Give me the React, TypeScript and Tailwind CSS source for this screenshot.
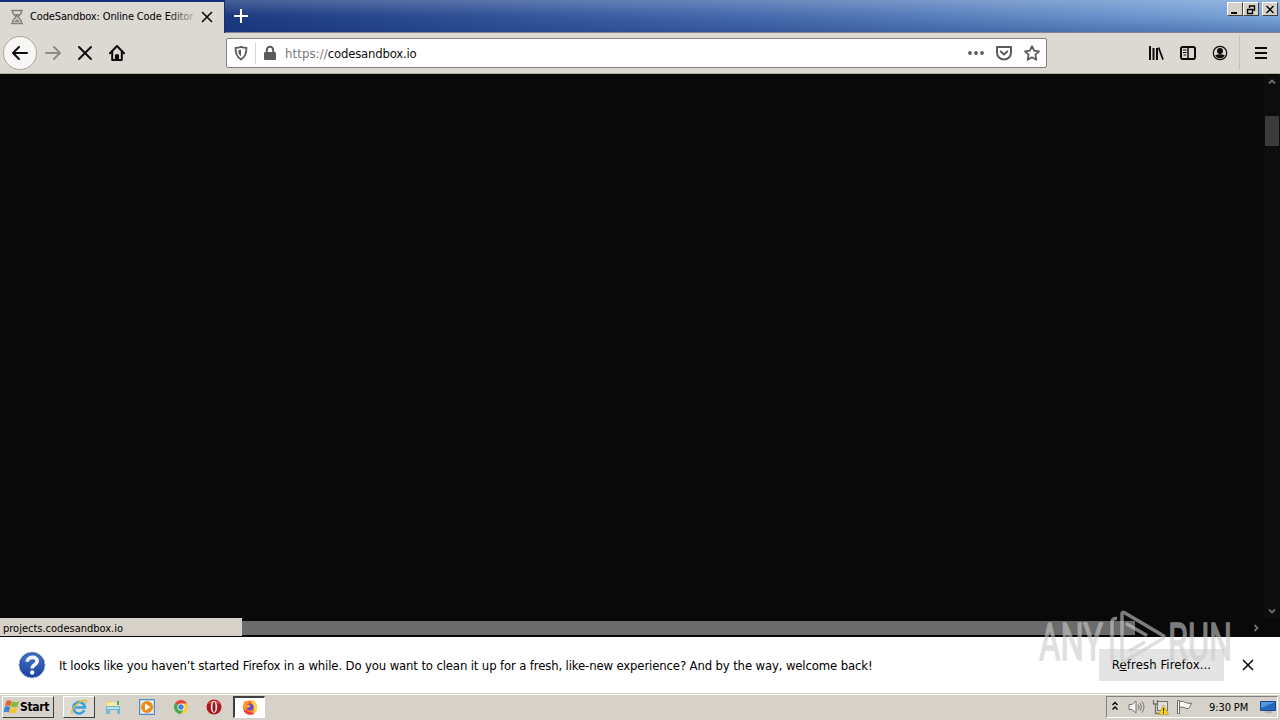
import type { ReactNode } from 'react';

const Hourglass = () => (
	<svg width="14" height="16" viewBox="0 0 14 16" fill="none" stroke="#85827e" strokeWidth="1.5">
		<path d="M1 1.5h12M1 14.5h12M2.8 2v2.2L6 8l-3.2 3.8V14M11.2 2v2.2L8 8l3.2 3.8V14" />
		<path d="M4 5h6L7 8zM4 13l3-3 3 3z" fill="#85827e" stroke="none" />
	</svg>
);

const Cross = ({ size, weight }: { size: number; weight: number }) => (
	<svg width={size} height={size} viewBox="0 0 16 16" fill="none" stroke="#0c0c0d" strokeWidth={weight} strokeLinecap="round">
		<path d="M2 2l12 12M14 2L2 14" />
	</svg>
);

const Arrow = ({ color }: { color: string }) => (
	<svg width="18" height="18" viewBox="0 0 18 18" fill="none" stroke={color} strokeWidth="2" strokeLinecap="round" strokeLinejoin="round">
		<path d="M16 9H2M8 3L2 9l6 6" />
	</svg>
);

const CaptionButton = ({ children }: { children: ReactNode }) => (
	<div className="w-4 h-[14px] bg-[#d6d1c9] border-t border-l border-t-white border-l-white border-r border-b border-r-[#404040] border-b-[#404040] flex items-center justify-center">
		<svg width="12" height="11" viewBox="0 0 12 11" fill="none" stroke="#000">
			{children}
		</svg>
	</div>
);

const TitleBar = () => (
	<div className="h-[33px] flex items-start bg-[linear-gradient(to_right,#0a246a_0%,#29498f_30%,#4a6fb0_62%,#7ba6da_100%)] relative">
		<div className="absolute inset-0 bg-linear-to-b from-white/20 via-transparent to-[#102a70]/30 border-b border-[#7f868f]" />
		<div className="relative w-[225px] h-[33px] pt-[2px] bg-[#152f78]">
			<div className="h-[31px] w-[224px] bg-[#dcd8d2] flex items-center">
				<div className="ml-[10px] -mt-[2px]">
					<Hourglass />
				</div>
				<div className="relative ml-[6px] -mt-px w-[165px] h-4 overflow-hidden whitespace-nowrap text-[11px] leading-4 tracking-[-0.14px]">
					CodeSandbox: Online Code Editor
					<div className="absolute right-0 top-0 h-4 w-7 bg-linear-to-r from-transparent to-[#dcd8d2]/85" />
				</div>
				<div className="ml-[6px] -mt-[2px]">
					<Cross size={12} weight={2.2} />
				</div>
			</div>
		</div>
		<svg className="relative ml-2 mt-2" width="16" height="16" viewBox="0 0 16 16" stroke="#fff" strokeWidth="2">
			<path d="M1 8h14M8 1v14" />
		</svg>
		<div className="relative ml-auto mt-[2px] mr-[2px] flex">
			<CaptionButton>
				<path d="M2 9h6" strokeWidth="2" />
			</CaptionButton>
			<CaptionButton>
				<path d="M4.5 4V2h5v4H8M4 2h6M2.5 5.5h5v4h-5zM2 5.5h6" strokeWidth="1.3" />
			</CaptionButton>
			<div className="w-[3px]" />
			<CaptionButton>
				<path d="M2.5 2l7 7M9.5 2l-7 7" strokeWidth="1.4" />
			</CaptionButton>
		</div>
	</div>
);

const NavBar = () => (
	<div className="h-[41px] bg-[#dcd8d2] border-b border-[#b1ada7] flex items-center">
		<div className="ml-[3px] w-[34px] h-[34px] rounded-full bg-[#f8f7f5] border border-[#aaa7a1] flex items-center justify-center">
			<Arrow color="#0c0c0d" />
		</div>
		<div className="ml-[7px] rotate-180">
			<Arrow color="#8e8b87" />
		</div>
		<div className="ml-[15px]">
			<Cross size={16} weight={2} />
		</div>
		<svg className="ml-4" width="16" height="16" viewBox="0 0 16 16" fill="none" stroke="#0c0c0d" strokeWidth="2" strokeLinejoin="round" strokeLinecap="round">
			<path d="M1 8.2L8 1l7 7.2" />
			<path d="M3.2 7v8h9.6V7" />
			<path d="M6.5 14.5V9.8h3v4.7z" fill="#0c0c0d" strokeWidth="1" />
		</svg>
		<div className="ml-[101px] w-[821px] h-[30px] bg-white border border-[#85827e] rounded-[2px] flex items-center">
			<svg className="ml-[6px]" width="16" height="16" viewBox="0 0 16 16" fill="none" stroke="#5b5b5d">
				<path d="M8 1.8c2 .8 3.800 1 5.500 1 0 5.500-1 9.200-5.500 11.700C3.500 12 2.500 8.300 2.500 2.800c1.700 0 3.500-.2 5.500-1z" strokeWidth="1.800" strokeLinejoin="round" />
				<path d="M8 4.500v7C6 10 5.500 8 5.300 5.200z" fill="#5b5b5d" stroke="none" />
			</svg>
			<div className="ml-[6px] w-px h-[22px] bg-[#d7d7d8]" />
			<svg className="ml-[6px]" width="16" height="16" viewBox="0 0 16 16">
				<rect x="2" y="7" width="12" height="8" rx="1.2" fill="#5b5b5d" />
				<path d="M4.8 8V5a3.2 3.2 0 0 1 6.400 0v3" fill="none" stroke="#5b5b5d" strokeWidth="2" />
			</svg>
			<div className="ml-[7px] mt-px text-[13px] leading-4 text-[#77777a] whitespace-nowrap tracking-[0.1px]">
				https://<span className="text-[#0c0c0d] tracking-[-0.2px]">codesandbox.io</span>
			</div>
			<div className="ml-auto mr-[6px] flex items-center gap-3">
				<svg width="16" height="16" viewBox="0 0 16 16" fill="#5b5b5d">
					<circle cx="2" cy="8" r="1.900" />
					<circle cx="8" cy="8" r="1.900" />
					<circle cx="14" cy="8" r="1.900" />
				</svg>
				<svg width="16" height="16" viewBox="0 0 16 16" fill="none" stroke="#5b5b5d" strokeWidth="2" strokeLinejoin="round" strokeLinecap="round">
					<path d="M1 2h14v5.500a7 7 0 0 1-14 0z" />
					<path d="M4.800 6.500L8 9.500l3.200-3" />
				</svg>
				<svg width="16" height="16" viewBox="0 0 16 16" fill="none" stroke="#5b5b5d" strokeWidth="1.800" strokeLinejoin="round">
					<path d="M8 1.200l2.100 4.500 4.900.6-3.600 3.400.9 5L8 12.300l-4.300 2.400.9-5L1 6.300l4.900-.6z" />
				</svg>
			</div>
		</div>
		<div className="ml-auto flex items-center gap-4">
			<svg width="16" height="16" viewBox="0 0 16 16" fill="none" stroke="#0c0c0d" strokeWidth="2">
				<path d="M2 1v14M5.500 3v12M9 3v12" />
				<path d="M10.600 2.500L15 14.600" strokeWidth="1.700" />
			</svg>
			<svg width="16" height="16" viewBox="0 0 16 16" fill="none" stroke="#0c0c0d">
				<rect x="1" y="2" width="14" height="12" rx="1.800" strokeWidth="2" />
				<path d="M8 2v12" strokeWidth="1.500" />
				<path d="M3 5h3.500M3 7.500h3.500M3.500 10H6" />
			</svg>
			<svg width="16" height="16" viewBox="0 0 16 16" fill="#0c0c0d">
				<circle cx="8" cy="8" r="6.700" fill="none" stroke="#0c0c0d" strokeWidth="1.200" />
				<circle cx="8" cy="6" r="3" />
				<path d="M3.200 10.300Q5.300 9.200 8 9.200t4.800 1.100A5.300 5.300 0 0 1 3.200 10.300z" />
			</svg>
		</div>
		<div className="ml-[11px] w-px h-[34px] bg-[#c4c0ba]" />
		<svg className="ml-[15px] mr-[13px]" width="12" height="16" viewBox="0 0 12 16" stroke="#0c0c0d" strokeWidth="2">
			<path d="M0 3h12M0 8h12M0 13h12" />
		</svg>
	</div>
);

const Chevron = ({ className }: { className: string }) => (
	<svg className={className} width="8" height="8" viewBox="0 0 8 8" fill="none" stroke="#6e6e6e" strokeWidth="1.800">
		<path d="M1 5.500l3-3 3 3" />
	</svg>
);

const Viewport = () => (
	<div className="h-[563px] bg-[#090909] flex flex-col">
		<div className="flex-1 flex">
			<div className="flex-1" />
			<div className="w-4 bg-[#0d0d0d] flex flex-col items-center">
				<Chevron className="mt-[4px]" />
				<div className="mt-[30px] w-[14px] h-[30px] bg-[#3a3a3a]" />
				<Chevron className="mt-auto mb-[3px] rotate-180" />
			</div>
		</div>
		<div className="h-[19px] flex">
			<div className="w-[242px] h-[18px] bg-[#d6d1c9] pl-[3px] text-[11px] leading-[21px] whitespace-nowrap">projects.codesandbox.io</div>
			<div className="mt-[3px] w-[893px] h-[14px] bg-[#6b6b6b]" />
			<Chevron className="ml-auto mr-[20px] mt-[6px] rotate-90" />
		</div>
	</div>
);

const NotificationBar = () => (
	<div className="h-[56px] bg-white flex items-center">
		<svg className="ml-[18px]" width="28" height="28" viewBox="0 0 28 28">
			<defs>
				<linearGradient id="help" x1="0" y1="0" x2="0" y2="1">
					<stop offset="0" stopColor="#4978cc" />
					<stop offset="1" stopColor="#173f9b" />
				</linearGradient>
			</defs>
			<circle cx="14" cy="14" r="13" fill="url(#help)" stroke="#b4c3e4" />
			<circle cx="14" cy="14" r="12" fill="none" stroke="#23509f" />
			<path d="M9.200 10.700c.2-5.500 10-5.700 10-.7 0 3.600-5 3.500-5 7.500" fill="none" stroke="#f4f6fb" strokeWidth="3.600" />
			<circle cx="14.200" cy="21.500" r="2.200" fill="#f4f6fb" />
		</svg>
		<div className="ml-[13px] mt-px text-[13px] leading-4 whitespace-nowrap tracking-[-0.14px]">
			It looks like you haven’t started Firefox in a while. Do you want to clean it up for a fresh, like-new experience? And by the way, welcome back!
		</div>
		<div className="ml-auto w-[125px] h-8 bg-[#e4e4e4] text-[13px] leading-[31px] text-center whitespace-nowrap tracking-[0.1px]">
			R<span className="underline">e</span>fresh Firefox...
		</div>
		<div className="ml-[18px] mr-[26px]">
			<Cross size={12} weight={2.2} />
		</div>
	</div>
);

const WindowsFlag = () => (
	<svg width="17" height="16" viewBox="0 0 17 16">
		<path d="M3.500 2Q6 .6 8.500 2.200L7.300 7.300Q5 6 2 7.200z" fill="#e5602b" />
		<path d="M9 2.400Q12.500 4 16 2.300L14.600 7.500Q11.500 9 7.800 7.500z" fill="#83b93c" />
		<path d="M1.800 7.800Q4.500 6.600 7.100 8L5.800 13.400Q3.300 12 .5 13.200z" fill="#3c82cc" />
		<path d="M7.600 8.200Q11 9.800 14.400 8.200L13 13.500Q10 15 6.300 13.600z" fill="#f5c431" />
	</svg>
);

const TaskIcons = () => (
	<>
		<div className="ml-[9px] w-[32px] h-[22px] bg-[#dedad4] border border-t-white border-l-white border-r-[#404040] border-b-[#404040] flex items-center justify-center">
			<svg width="18" height="18" viewBox="0 0 18 18" fill="none">
				<path d="M14.300 12.200A5.700 5.700 0 1 1 14.800 9.500H5" stroke="#36a3dc" strokeWidth="2.600" />
				<path d="M2.500 15.800C-.5 12.500 9 2 15.500 2.200c1.300.2 1.200 1.800.4 3.200" stroke="#e8b830" strokeWidth="1.400" />
			</svg>
		</div>
		<svg className="ml-[9px]" width="18" height="18" viewBox="0 0 18 18">
			<path d="M2 3h5l1 2h7v6H2z" fill="#e9cf6b" />
			<path d="M3 4.500h9l3 1.500v3H3z" fill="#f7eaa8" />
			<path d="M2 8h14v8h-3v-4H6v4H2z" fill="#72b9d8" />
			<path d="M3 9h12v2H3z" fill="#b9e2ed" />
			<path d="M13 3h2v4h-2z" fill="#5caa59" />
		</svg>
		<svg className="ml-[17px]" width="16" height="16" viewBox="0 0 16 16">
			<rect x=".5" y=".5" width="15" height="15" fill="#b7d5ee" stroke="#568dbd" />
			<rect x="2" y="2" width="12" height="12" fill="#e6f0f7" />
			<circle cx="8" cy="8" r="6" fill="#f08b18" />
			<path d="M6 4.500L11.500 8 6 11.500z" fill="#fff" />
		</svg>
		<svg className="ml-[18px]" width="16" height="16" viewBox="0 0 16 16">
			<path d="M8 8L1.900 4.500A7 7 0 0 1 14.100 4.500z" fill="#df4736" />
			<path d="M8 8L1.900 4.500A7 7 0 0 0 8 15L11 9.800z" fill="#4aa651" />
			<path d="M8 4.500h6.100A7 7 0 0 1 8 15L11.200 9.800z" fill="#f6cc3b" />
			<circle cx="8" cy="8" r="3.500" fill="#fff" />
			<circle cx="8" cy="8" r="2.700" fill="#4483d3" />
		</svg>
		<svg className="ml-[17px]" width="16" height="16" viewBox="0 0 16 16">
			<circle cx="8" cy="8" r="7.500" fill="#b0161b" />
			<path d="M2 5a7 7 0 0 1 12 0Q8 2 2 5z" fill="#d9656a" />
			<ellipse cx="8" cy="8" rx="3.200" ry="6" fill="#f7eeee" />
			<ellipse cx="8" cy="8" rx="1.500" ry="5" fill="#98151a" />
		</svg>
		<div className="ml-[11px] w-[32px] h-[22px] bg-white border border-t-[#404040] border-l-[#404040] border-r-white border-b-white border-t-2 border-l-2 flex items-center justify-center">
			<svg className="-mt-[2px]" width="16" height="16" viewBox="0 0 17 17">
				<circle cx="8.500" cy="9" r="7.500" fill="#ff7c20" />
				<path d="M1 8Q.8 4 3.500 1.500 4 3.200 6 3.500L8 6 4.500 12z" fill="#ff9b25" />
				<path d="M11 .5Q16.500 4 16 10q-.8 5-5 6 3-5 1-9-3-3-1-6.500z" fill="#ffd23f" />
				<path d="M2 13a7.500 7.500 0 0 0 12 1.500Q8 16 4 11z" fill="#f33f4b" />
				<circle cx="8.500" cy="8.500" r="3.700" fill="#674bd1" />
				<path d="M4 7q4-2 5 .5l-2.500 2q-2 .5-2.500-2.500z" fill="#ffac2e" />
			</svg>
		</div>
	</>
);

const SystemTray = () => (
	<div className="ml-auto mr-[2px] w-[172px] h-[22px] border border-[#858079] border-b-white border-r-white flex items-center">
		<svg className="ml-[4px] -mt-[2px]" width="8" height="12" viewBox="0 0 8 12" fill="none" stroke="#000" strokeWidth="1.400">
			<path d="M1.500 5L4 2.500 6.500 5M1.500 9.500L4 7l2.500 2.500" />
		</svg>
		<svg className="ml-[9px]" width="17" height="16" viewBox="0 0 17 16" fill="none" stroke="#77736d">
			<path d="M1 5.500h3L8 2v12l-4-3.500H1z" fill="#f8f7f5" />
			<path d="M10 5.500q2 2.500 0 5M12 4q3 4 0 8M14 2.500q4 5.500 0 11" />
		</svg>
		<svg className="ml-[7px]" width="17" height="16" viewBox="0 0 17 16" fill="none">
			<rect x="5.500" y="2.500" width="10" height="9" fill="#dedede" stroke="#77736d" />
			<path d="M1.500 1v4h4V1M3.500 5v9.500H9" stroke="#77736d" strokeWidth="1.300" />
			<path d="M11.500 6L16.500 15.500h-10z" fill="#f9d423" stroke="#b39116" strokeWidth=".6" />
			<path d="M11.500 9v3.500M11.500 13.300v1.200" stroke="#33300a" strokeWidth="1.200" />
		</svg>
		<svg className="ml-[7px]" width="17" height="16" viewBox="0 0 17 16" fill="#fcfcfb" stroke="#6d6964">
			<path d="M1.500 1.500h2v13h-2z" />
			<path d="M3.500 2.500q3-1 6 1 3 1.500 6 .5-1 3-3 5.500-2 .5-4-.8-2-1.200-5-.2z" />
		</svg>
		<div className="ml-[16px] mt-px text-[11px] leading-4 tracking-[-0.1px] whitespace-nowrap">9:30 PM</div>
		<svg className="ml-auto mr-[1px]" width="16" height="14" viewBox="0 0 16 14">
			<path d="M.5 1.500h15v9H.5z" fill="#2468bc" stroke="#1b478b" />
			<path d="M1 2h14L1 8z" fill="#5997da" />
			<path d="M5 11h7v2H5z" fill="#a9b4c1" />
		</svg>
	</div>
);

const Taskbar = () => (
	<div className="h-[27px] bg-[#d6d1c9] border-t border-[#d6d1c9] shadow-[inset_0_1px_0_#fff] flex items-center">
		<div className="ml-[2px] w-[52px] h-[22px] border border-t-white border-l-white border-r-[#404040] border-b-[#404040] flex items-center">
			<WindowsFlag />
			<span className="text-[12px] font-bold leading-4 tracking-[-0.3px]">Start</span>
		</div>
		<TaskIcons />
		<SystemTray />
	</div>
);

// Translucent stamp that floats over the lower right corner
const Watermark = () => (
	<svg className="absolute left-[1030px] top-[602px] pointer-events-none" width="210" height="70" viewBox="0 0 210 70" fill="none" opacity="0.6">
		<g fontFamily="Roboto, sans-serif" fontSize="52" fill="#cbcbcb" stroke="#cbcbcb" strokeWidth="1.4">
			<text x="9" y="57.500" textLength="64" lengthAdjust="spacingAndGlyphs">ANY</text>
			<text x="138" y="57.500" textLength="64" lengthAdjust="spacingAndGlyphs">RUN</text>
		</g>
		<g stroke="#cbcbcb" strokeWidth="3.500" strokeLinejoin="round">
			<path d="M82 61V20q0-4 5-3.500" />
			<path d="M92 54V11.500q0-2 3-.5l38 22.500q2 1.500 0 3L95 59q-3 1.500-3-1.500z" />
			<path d="M96 21.500l21 12M99 49l16-9" />
		</g>
	</svg>
);

export default function App() {
	return (
		<div className="relative w-[1280px] h-[720px] overflow-hidden flex flex-col text-black font-['DejaVu_Sans_Condensed','DejaVu_Sans',sans-serif]">
			<TitleBar />
			<NavBar />
			<Viewport />
			<NotificationBar />
			<Taskbar />
			<Watermark />
		</div>
	);
}
